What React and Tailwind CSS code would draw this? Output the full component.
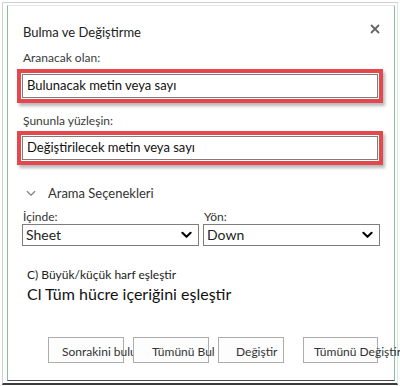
import React from "react";

const font = { fontFamily: "'Segoe UI', Lato, 'Liberation Sans', sans-serif" };

function Chevron({ className, sw = 2.2 }) {
  return (
    <svg viewBox="0 0 12 8" className={className} fill="none" stroke="currentColor" strokeWidth={sw} strokeLinecap="round" strokeLinejoin="round">
      <path d="M1.5 1.5 L6 6 L10.5 1.5" />
    </svg>
  );
}

function Field({ value }) {
  return (
    <div className="ml-[9px] w-[366px] border-[4px] border-[#e4474c] shadow-[2px_3px_3px_rgba(0,0,0,0.28)]">
      <div className="m-px flex h-[24px] items-center border border-[#7d7d7d] bg-white px-[4px] text-[13px] text-[#111]">
        {value}
      </div>
    </div>
  );
}

function Select({ value, width }) {
  return (
    <div className={`flex h-[22px] items-center justify-between border border-[#7d7d7d] bg-white pl-[3px] pr-[6px] text-[14px] text-[#222] ${width}`}>
      <span>{value}</span>
      <Chevron className="h-[8px] w-[11px] text-black" />
    </div>
  );
}

function Btn({ label, w, textPad }) {
  return (
    <div className={`relative h-[26px] border border-[#adadad] bg-[#fdfdfd] ${w}`}>
      <span className={`absolute top-[5px] whitespace-nowrap text-[12px] text-[#333] ${textPad}`}>{label}</span>
    </div>
  );
}

export default function App() {
  return (
    <div className="h-[386px] w-[400px] bg-white pt-[2px] pl-[2px]" style={font}>
      <div className="h-[383px] w-[396px] border-t border-l border-r border-b-2 border-t-[#cfcfcf] border-l-[#cfcfcf] border-r-[#d6ebdf] border-b-[#3c3c3c] pt-[2px] pl-[4px]">
        <div className="h-[376px] w-[388px] border border-t-[#e6e6e6] border-l-[#86c19f] border-r-[#86c19f] border-b-[#4a4a4a] bg-white">
          <div className="flex h-[44px] items-start justify-between pt-[17px] pl-[15px] pr-[14px]">
            <span className="text-[13px] leading-[18px] text-[#222]">Bulma ve Değiştirme</span>
            <svg viewBox="0 0 10 10" className="mt-[1px] h-[10px] w-[10px] text-[#666]" stroke="currentColor" strokeWidth="1.8">
              <path d="M1 1 L9 9 M9 1 L1 9" />
            </svg>
          </div>
          <div className="pl-[15px] text-[12px] leading-[16px] text-[#3a3a3a]">Aranacak olan:</div>
          <div className="mt-[3px]">
            <Field value="Bulunacak metin veya sayı" />
          </div>
          <div className="mt-[10px] pl-[15px] text-[12px] leading-[16px] text-[#3a3a3a]">Şununla yüzleşin:</div>
          <div className="mt-[2px]">
            <Field value="Değiştirilecek metin veya sayı" />
          </div>
          <div className="mt-[19px] flex items-center pl-[18px] text-[13px] text-[#333]">
            <Chevron className="h-[7px] w-[10px] text-[#888]" sw={1.6} />
            <span className="ml-[12px]">Arama Seçenekleri</span>
          </div>
          <div className="mt-[6px] flex gap-[4px] pl-[14px]">
            <div>
              <div className="pl-px text-[12px] leading-[14px] text-[#333]">İçinde:</div>
              <Select value="Sheet" width="w-[177px]" />
            </div>
            <div>
              <div className="pl-px text-[12px] leading-[14px] text-[#333]">Yön:</div>
              <Select value="Down" width="w-[177px]" />
            </div>
          </div>
          <div className="mt-[21px] pl-[19px] text-[12px] leading-[16px] text-[#222]">C) Büyük/küçük harf eşleştir</div>
          <div className="mt-[1px] pl-[19px] text-[16px] leading-[20px] text-[#111]">Cl Tüm hücre içeriğini eşleştir</div>
          <div className="mt-[33px] flex pl-[40px]">
            <Btn label="Sonrakini bulur" w="w-[76px]" textPad="left-[13px]" />
            <div className="ml-[9px]">
              <Btn label="Tümünü Bul" w="w-[76px]" textPad="left-[18px]" />
            </div>
            <div className="ml-[9px]">
              <Btn label="Değiştir" w="w-[66px]" textPad="left-[17px]" />
            </div>
            <div className="ml-[19px]">
              <Btn label="Tümünü Değiştir" w="w-[75px]" textPad="left-[10px]" />
            </div>
          </div>
        </div>
      </div>
    </div>
  );
}
